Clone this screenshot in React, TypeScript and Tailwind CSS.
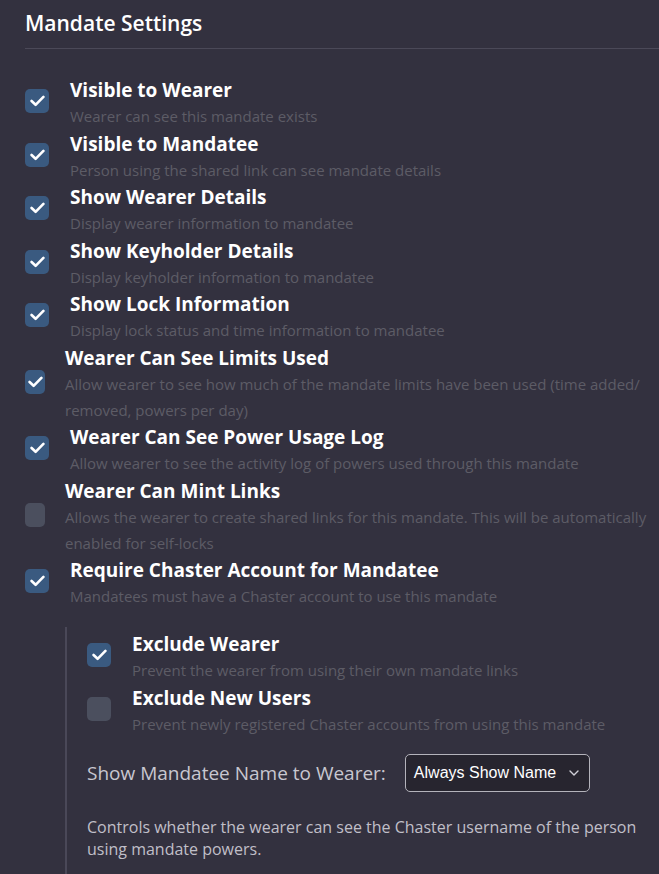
import React from 'react';

type Item = {
  title: string;
  desc: string;
  checked: boolean;
  // some rows sit a few pixels left, as in the reference
  shift?: boolean;
  narrow?: boolean;
};

const items: Item[] = [
  { title: 'Visible to Wearer', desc: 'Wearer can see this mandate exists', checked: true },
  { title: 'Visible to Mandatee', desc: 'Person using the shared link can see mandate details', checked: true },
  { title: 'Show Wearer Details', desc: 'Display wearer information to mandatee', checked: true },
  { title: 'Show Keyholder Details', desc: 'Display keyholder information to mandatee', checked: true },
  { title: 'Show Lock Information', desc: 'Display lock status and time information to mandatee', checked: true },
  {
    title: 'Wearer Can See Limits Used',
    desc: 'Allow wearer to see how much of the mandate limits have been used (time added/ removed, powers per day)',
    checked: true,
    shift: true,
    narrow: true,
  },
  { title: 'Wearer Can See Power Usage Log', desc: 'Allow wearer to see the activity log of powers used through this mandate', checked: true },
  {
    title: 'Wearer Can Mint Links',
    desc: 'Allows the wearer to create shared links for this mandate. This will be automatically enabled for self-locks',
    checked: false,
    shift: true,
    narrow: true,
  },
  { title: 'Require Chaster Account for Mandatee', desc: 'Mandatees must have a Chaster account to use this mandate', checked: true },
];

const nested: Item[] = [
  { title: 'Exclude Wearer', desc: 'Prevent the wearer from using their own mandate links', checked: true },
  { title: 'Exclude New Users', desc: 'Prevent newly registered Chaster accounts from using this mandate', checked: false },
];

const Box: React.FC<{ checked: boolean; narrow?: boolean }> = ({ checked, narrow }) => (
  <div
    className={`${narrow ? 'w-[20px]' : 'w-[24px]'} h-[24px] mb-[4px] shrink-0 rounded-[5px] flex items-center justify-center ${
      checked ? 'bg-[#3a5a80]' : 'bg-[#4b4f5e]'
    }`}
  >
    {checked && (
      <svg width="15" height="12" viewBox="0 0 15 12" fill="none">
        <path d="M1.6 6 L5.6 9.8 L13.4 1.9" stroke="white" strokeWidth="2.6" strokeLinecap="round" strokeLinejoin="round" />
      </svg>
    )}
  </div>
);

const Row: React.FC<{ item: Item }> = ({ item }) => (
  <div className={`flex items-center ${item.shift ? 'gap-[20px]' : 'gap-[21px]'}`}>
    <Box checked={item.checked} narrow={item.narrow} />
    <div className="flex flex-col">
      <div className="text-[19px] leading-[26px] font-bold text-white">{item.title}</div>
      <div className="text-[15px] leading-[26px] text-[#5d5c66]">{item.desc}</div>
    </div>
  </div>
);

export default function App() {
  return (
    <div className="min-h-[874px] bg-[#33313f] pl-[25px] font-['Open_Sans','Noto_Sans',sans-serif] overflow-hidden">
      <h2 className="pt-[7px] pb-[9px] text-[21px] leading-[32px] font-semibold text-white">Mandate Settings</h2>
      <div className="h-px bg-[#4b4958]" />
      <div className="pt-[28px] pr-[6px] flex flex-col gap-[1.5px]">
        {items.map((it) => (
          <Row key={it.title} item={it} />
        ))}
      </div>
      <div className="mt-[18px] ml-[40px] border-l-2 border-[#4a4858] pl-[20px] pt-[4px] pb-[30px]">
        <div className="flex flex-col gap-[2px]">
          {nested.map((it) => (
            <Row key={it.title} item={it} />
          ))}
        </div>
        <div className="mt-[17px] flex items-center gap-[19px]">
          <span className="text-[19px] leading-[26px] text-[#c8c7d0]">Show Mandatee Name to Wearer:</span>
          <div className="w-[185px] h-[38px] rounded-[5px] border border-[#b4b3bb] bg-[#27252f] flex items-center justify-between pl-[8px] pr-[10px]">
            <span className="font-['Liberation_Sans',sans-serif] text-[16px] text-white">Always Show Name</span>
            <svg width="10" height="6" viewBox="0 0 10 6" fill="none">
              <path d="M1 1 L5 5 L9 1" stroke="#d0d0d8" strokeWidth="1.4" strokeLinecap="round" strokeLinejoin="round" />
            </svg>
          </div>
        </div>
        <p className="mt-[24px] text-[16px] leading-[22px] text-[#c0bfc8]">
          Controls whether the wearer can see the Chaster username of the person using mandate powers.
        </p>
      </div>
    </div>
  );
}
